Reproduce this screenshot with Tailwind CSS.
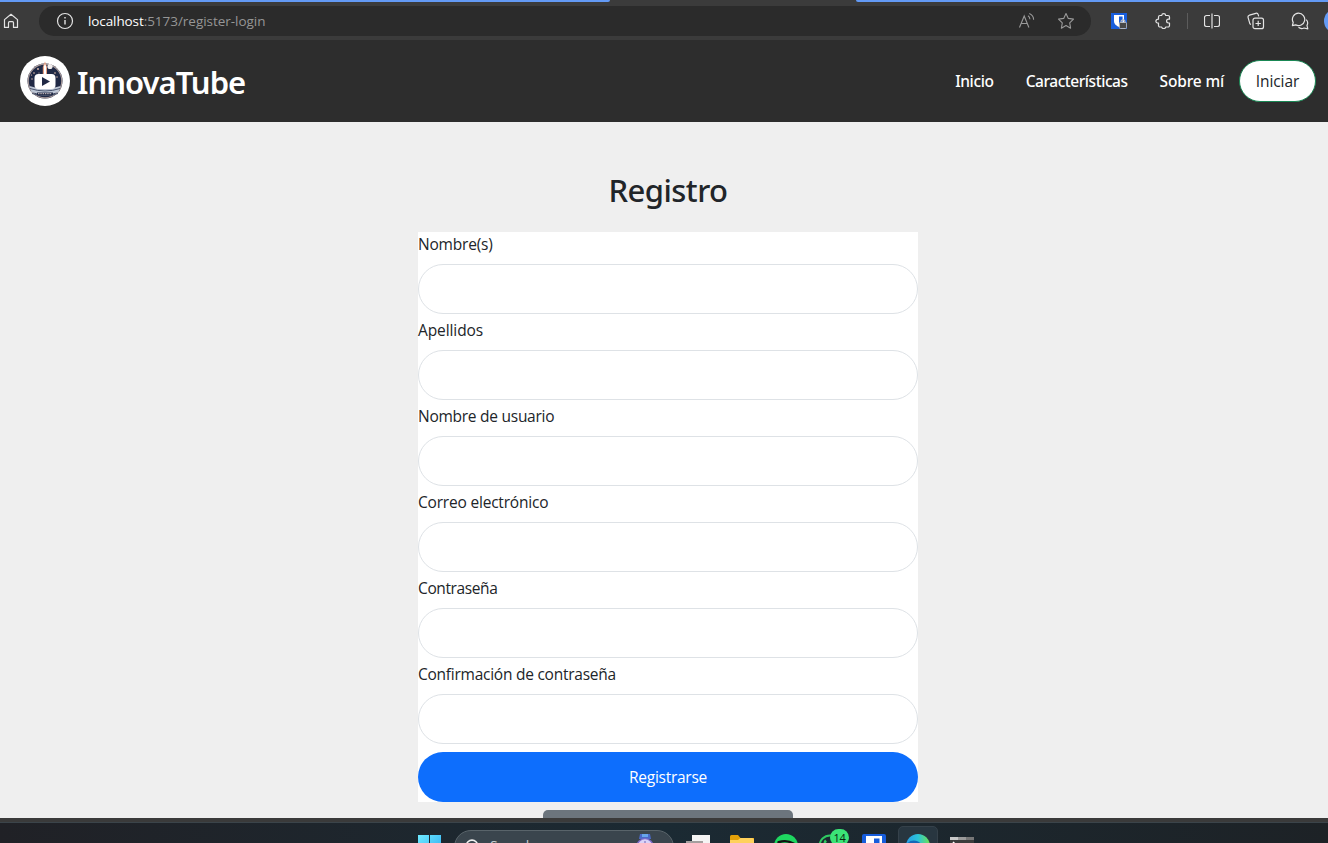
<!DOCTYPE html>
<html lang="es">
<head>
<meta charset="utf-8">
<title>InnovaTube</title>
<script src="https://cdn.jsdelivr.net/npm/@tailwindcss/browser@4"></script>
</head>
<body class="flex h-[843px] w-[1328px] flex-col overflow-hidden bg-[#efefef] font-['Open_Sans','Noto_Sans',sans-serif] text-[15.5px] leading-6 text-[#212529]">

<!-- Browser toolbar -->
<div class="flex h-[2px] shrink-0 justify-between bg-[#3b3b3b]">
  <div class="w-[610px] rounded-br-[2px] bg-[#639af5]"></div>
  <div class="w-[472px] rounded-bl-[2px] bg-[#639af5]"></div>
</div>
<div class="flex h-[38px] shrink-0 items-center overflow-hidden bg-[#3b3b3b] text-[#e4e4e4]">
  <svg class="ml-[3px] h-4 w-4 shrink-0" viewBox="0 0 16 16" fill="none" stroke="currentColor" stroke-width="1.2" stroke-linejoin="round"><path d="M1.5 6.6 8 1.3l6.500 5.300V14.400H10.500V9.700a1 1 0 0 0-1-1h-3a1 1 0 0 0-1 1V14.400H1.500Z"/></svg>
  <div class="ml-5 flex h-[30px] w-[1052px] shrink-0 items-center rounded-full bg-[#2b2b2b]">
    <svg class="ml-[17px] h-[18px] w-[18px]" viewBox="0 0 18 18" fill="none" stroke="currentColor" stroke-width="1.2"><circle cx="9" cy="9" r="7.500"/><path d="M9 8v4.500M9 5v1.500" stroke-width="1.400"/></svg>
    <p class="ml-[14px] flex text-[13.5px] leading-5"><span class="tracking-[-0.1px] text-white">localhost</span><span class="tracking-[-0.03px] text-[#969696]">:5173/register-login</span></p>
    <svg class="ml-auto h-[18px] w-[18px] text-[#9a9a9a]" viewBox="0 0 18 18" fill="none" stroke="currentColor" stroke-width="1.1"><path d="m1.500 15.500 4.700-11.500 4.700 11.500M3.200 11.500h6M10 3.800c1.200.8 1.900 2 1.900 3.500M11.300 1.500c2.800 1.200 4.300 3.300 4.300 6.200"/></svg>
    <svg class="mr-4 ml-[21px] h-[18px] w-[18px] text-[#9a9a9a]" viewBox="0 0 18 18" fill="none" stroke="currentColor" stroke-width="1.100" stroke-linejoin="round"><path d="m9 1.500 2.300 4.900 5.200.7-3.800 3.700.9 5.400L9 13.600l-4.600 2.600.9-5.400-3.800-3.700 5.200-.7Z"/></svg>
  </div>
  <svg class="ml-5 h-4 w-4 shrink-0" viewBox="0 0 16 16"><path fill="#175ddc" d="M0 0h16v16H0z"/><path fill="#fff" d="M3 2h10v6c0 3.500-3 5-5 6-2-1-5-2.500-5-6Z"/><path fill="#175ddc" d="M8 3.400h3.600V8c0 2-1.600 3.400-3.600 4.400Z"/><path d="M10 10V8.800a2 2 0 0 1 4 0V10" fill="none" stroke="#bbb" stroke-width="1.200"/><rect x="8.400" y="9.500" width="7.200" height="6" rx="1" fill="#484848" stroke="#ccc" stroke-width=".8"/></svg>
  <svg class="ml-7 h-4 w-4 shrink-0" viewBox="0 0 16 16" fill="none" stroke="currentColor" stroke-width="1.200" stroke-linejoin="round"><path d="M5 2.500h1.700C6.800 1.300 7.600.7 8.700.7s1.900.6 2 1.800h2.300a1.500 1.500 0 0 1 1.500 1.500v2.200h-1a1.900 1.900 0 0 0 0 3.800h1v2.500a1.500 1.500 0 0 1-1.500 1.500h-2.300c-.1 1-.9 1.600-2 1.600s-1.900-.6-2-1.600H5a1.500 1.500 0 0 1-1.500-1.500V10.200C1.800 10.200.9 9.400.9 8.200s.9-2 2.600-2V4A1.500 1.500 0 0 1 5 2.500Z"/></svg>
  <div class="ml-4 h-4 w-px shrink-0 bg-[#5c5c5c]"></div>
  <svg class="ml-4 h-4 w-4 shrink-0" viewBox="0 0 16 16" fill="none" stroke="currentColor" stroke-width="1.200"><path d="M6 2.500H2.500a2 2 0 0 0-2 2v7a2 2 0 0 0 2 2H6M10 2.500h3.500a2 2 0 0 1 2 2v7a2 2 0 0 1-2 2H10M8 .5v15"/></svg>
  <svg class="ml-[27px] h-[18px] w-[18px] shrink-0" viewBox="0 0 18 18" fill="none" stroke="currentColor" stroke-width="1.200" stroke-linejoin="round"><rect x="6" y="6.200" width="10.500" height="10.500" rx="2"/><path d="M11.200 8.800v5.300M8.500 11.500h5.400M4 12.500a2 2 0 0 1-1.300-1.300L1.100 5.600a2 2 0 0 1 1.300-2.400l6.400-1.900a2 2 0 0 1 2.400 1.300l.5 1.700"/></svg>
  <svg class="ml-[26px] h-[18px] w-[18px] shrink-0" viewBox="0 0 18 18" fill="none" stroke="currentColor" stroke-width="1.200" stroke-linejoin="round"><path d="M7.500 1.200a6.200 6.200 0 1 1-2.800 11.700l-3.300.8.800-3.300A6.200 6.200 0 0 1 7.500 1.200Z"/><path d="M7.500 15.300c1.500 1.300 3.600 1.600 5.500.7l3.800.8-.8-3.400c1-1.900.7-4.200-.8-5.700"/></svg>
  <div class="ml-[15px] h-6 w-6 shrink-0 rounded-full bg-[#639af5]"></div>
</div>

<!-- Site navigation -->
<header class="flex h-[82px] shrink-0 items-center bg-[#2d2d2d] pr-3 pl-5 text-white">
  <svg class="h-[50px] w-[50px]" viewBox="0 0 50 50">
    <circle cx="25" cy="25" r="25" fill="#fff"/>
    <circle cx="25" cy="25" r="17.500" fill="#202945"/>
    <circle cx="25" cy="25" r="16.800" fill="none" stroke="#a99b9b" stroke-width="1.200"/>
    <g fill="#e8c4b2"><circle cx="14" cy="17" r=".8"/><circle cx="18" cy="13" r=".9"/><circle cx="19" cy="17" r=".6"/><circle cx="35" cy="17" r=".8"/><circle cx="37" cy="21" r=".7"/><circle cx="12" cy="23" r=".7"/><circle cx="11.500" cy="19" r=".6"/></g>
    <circle cx="30" cy="10.500" r="2.600" fill="#f2eeee"/>
    <path fill="#e7a084" d="M22.800 18V11L25 5.500l2 5.500v7Z"/><path fill="#fff" d="M24 18v-8l1-2 1 2v8Z"/>
    <path fill="#bdc6d5" d="M9.500 30q15.500 5 31 0l-2 6q-13.500 5-27 0Z"/>
    <path fill="none" stroke="#47536d" stroke-width="1" d="M10 32.500q15 5 30 0M12 37.500q13 4 26 0"/>
    <path fill="#202945" d="M17 36.500h16v2.500H17z"/><path stroke="#d7cccb" stroke-width="1" stroke-dasharray="1.500 .8" d="M18 37.700h14"/>
    <rect x="14.500" y="18" width="21" height="15" rx="4" fill="#fff"/>
    <path fill="#202945" d="m22 21 8 4.500-8 4.500Z"/>
  </svg>
  <span class="ml-[7px] pt-px font-['Noto_Sans',sans-serif] text-[31px] leading-10 font-semibold tracking-[-0.98px]">InnovaTube</span>
  <nav class="ml-auto flex items-center">
    <div class="flex pb-px font-['Noto_Sans',sans-serif] font-medium">
      <a class="mr-8 tracking-[-0.36px]">Inicio</a>
      <a class="mr-8 tracking-[-0.45px]">Características</a>
      <a class="mr-[15px] tracking-[-0.15px]">Sobre mí</a>
    </div>
    <a class="flex h-[42px] w-[77px] items-center justify-center rounded-full border border-[#198754] bg-white font-normal tracking-[-0.07px] text-[#212529]">Iniciar</a>
  </nav>
</header>

<!-- Registration form -->
<main class="flex h-[696px] shrink-0 flex-col items-center pl-2">
  <h1 class="mt-[47px] font-['Noto_Sans',sans-serif] text-[31px] leading-[42px] font-medium tracking-[-0.55px]">Registro</h1>
  <form class="mt-[21px] flex h-[570px] w-[500px] flex-col bg-white">
    <label class="mb-2 tracking-[-0.2px]">Nombre(s)</label>
    <input class="mb-1 h-[50px] shrink-0 rounded-full border border-[#dee2e6] bg-white px-4">
    <label class="mb-2 tracking-[-0.1px]">Apellidos</label>
    <input class="mb-1 h-[50px] shrink-0 rounded-full border border-[#dee2e6] bg-white px-4">
    <label class="mb-2 tracking-[-0.26px]">Nombre de usuario</label>
    <input class="mb-1 h-[50px] shrink-0 rounded-full border border-[#dee2e6] bg-white px-4">
    <label class="mb-2 tracking-[-0.2px]">Correo electrónico</label>
    <input class="mb-1 h-[50px] shrink-0 rounded-full border border-[#dee2e6] bg-white px-4">
    <label class="mb-2 tracking-[-0.38px]">Contraseña</label>
    <input class="mb-1 h-[50px] shrink-0 rounded-full border border-[#dee2e6] bg-white px-4">
    <label class="mb-2 tracking-[-0.25px]">Confirmación de contraseña</label>
    <input class="mb-2 h-[50px] shrink-0 rounded-full border border-[#dee2e6] bg-white px-4">
    <button type="button" class="h-[50px] shrink-0 rounded-full bg-[#0d6efd] pb-px tracking-[-0.26px] text-white">Registrarse</button>
  </form>
  <div class="mt-2 h-2 w-[250px] rounded-t-[5px] bg-[#6c757d]"></div>
</main>

<!-- Taskbar -->
<div class="h-1 shrink-0 bg-[#3a3a3a]"></div>
<footer class="flex h-[21px] shrink-0 items-start overflow-hidden border-t border-[#3b444a] bg-linear-to-r from-[#202126] via-[#1b2a33] to-[#1d2226] pl-[418px]">
  <svg class="mt-3 h-[23px] w-[23px] shrink-0" viewBox="0 0 23 23"><defs><linearGradient id="win" x2="1" y2="1"><stop stop-color="#6eeaff"/><stop offset="1" stop-color="#29a8f0"/></linearGradient></defs><path fill="url(#win)" d="M0 0h11v11H0zM12 0h11v11H12zM0 12h11v11H0zM12 12h11v11H12z"/></svg>
  <div class="mt-[7px] ml-[13px] flex h-[34px] w-[220px] shrink-0 items-start rounded-full border border-[#59646a] bg-[#3a454d]">
    <svg class="mt-2 ml-[10px] h-4 w-4" viewBox="0 0 16 16" fill="none" stroke="#f0f0f0" stroke-width="1.700"><circle cx="7" cy="6.700" r="5.600"/><path d="m11 11 4 4"/></svg>
    <span class="mt-[3px] ml-[9px] text-[14px] text-[#c8cdd0]">Search</span>
    <svg class="mt-[3px] mr-[18px] ml-auto h-7 w-5" viewBox="0 0 20 28"><path fill="#4b6ac8" d="M5 0h10l1 5H4z"/><path fill="#67a6ec" d="M7 0h6v3H7z"/><circle cx="10" cy="13" r="9" fill="#7f6ccb"/><circle cx="10" cy="12" r="6.800" fill="#d9d3f8"/><path d="M10 7v6l-3-2" fill="none" stroke="#7263b5"/></svg>
  </div>
  <svg class="mt-3 ml-3 h-6 w-6 shrink-0" viewBox="0 0 24 24"><path fill="#f4f4f4" d="M6 0h18v17H6z"/><path fill="#a49f9f" d="M0 6h17v17H0z"/></svg>
  <svg class="mt-3 ml-5 h-6 w-6 shrink-0" viewBox="0 0 24 24"><path fill="#e3a008" d="M0 1.500A1.500 1.500 0 0 1 1.500 0H8l2.500 3H24v6H0Z"/><path fill="#ffd15b" d="M0 5h8l2.500-2H22a2 2 0 0 1 2 2v15H0Z"/></svg>
  <svg class="mt-[11px] ml-5 h-6 w-6 shrink-0" viewBox="0 0 24 24"><circle cx="12" cy="12" r="12" fill="#1ed760"/><path d="M4.500 8.200c5-1.600 11-1.100 15.500 1.500" fill="none" stroke="#111" stroke-width="2.400" stroke-linecap="round"/></svg>
  <div class="relative mt-[11px] ml-5 h-6 w-6 shrink-0">
    <svg class="h-6 w-6" viewBox="0 0 24 24" fill="none" stroke="#2fc961" stroke-width="2"><circle cx="12" cy="12" r="10.500"/><path d="M8 6.500c-2 2-1 5 1 7.500" stroke-width="2.500"/></svg>
    <span class="absolute top-[-5px] left-3 flex h-[17px] w-[19px] items-center justify-center rounded-full bg-[#3be477] pb-px text-[11px] leading-none tracking-tight text-[#08250f]">14</span>
  </div>
  <svg class="mt-[11px] ml-5 h-6 w-6 shrink-0" viewBox="0 0 24 24"><rect width="24" height="24" rx="2" fill="#175ddc"/><path fill="#fff" d="M4 2h16v10c0 5-5 8-8 9-3-1-8-4-8-9Z"/><path fill="#175ddc" d="M12 4.500h5.500V12c0 3-3 5-5.500 6Z"/></svg>
  <div class="mt-[3px] ml-3 flex h-10 w-10 shrink-0 items-start justify-center rounded-[5px] border border-[#35414a] bg-[#283640] pt-[7px]">
    <svg class="h-6 w-6" viewBox="0 0 24 24"><defs><linearGradient id="edge"><stop stop-color="#289de8"/><stop offset=".5" stop-color="#2bc3d7"/><stop offset="1" stop-color="#6de350"/></linearGradient></defs><circle cx="12" cy="12" r="12" fill="url(#edge)"/><path fill="#1469b8" d="M0 12C2 5 12 5 15 10c-5-1-6 4-4 8 2 3 6 4 9 3C12 27 0 22 0 12Z"/></svg>
  </div>
  <svg class="mt-[14px] ml-3 h-5 w-6 shrink-0" viewBox="0 0 24 20"><rect width="24" height="20" rx="1" fill="#3c3c3c"/><path fill="#c9c9c9" d="M0 0h8v3H0z"/><path fill="#9b9b9b" d="M8 0h8v3H8z"/><path fill="#777" d="M16 0h8v3h-8z"/><path d="m3 5 3 3-3 3" fill="none" stroke="#fff" stroke-width="1.500"/></svg>
</footer>
</body>
</html>
